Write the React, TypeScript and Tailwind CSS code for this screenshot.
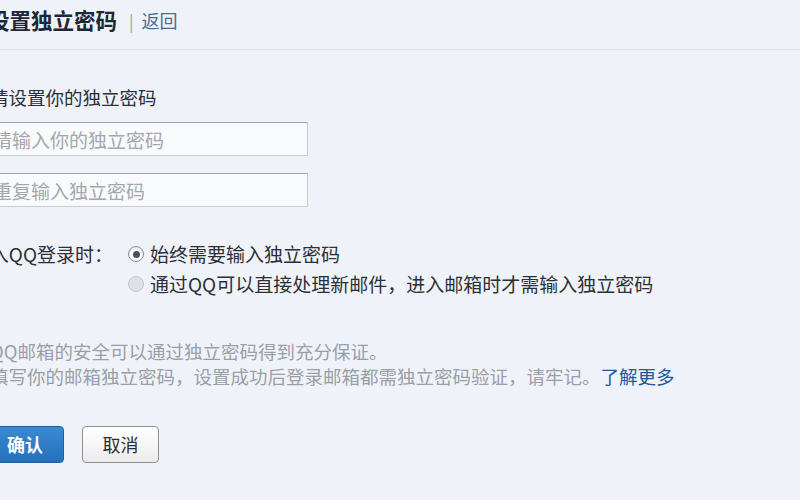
import React from "react";

function Radio({ checked }: { checked: boolean }) {
  return checked ? (
    <span className="flex h-[16px] w-[16px] shrink-0 items-center justify-center rounded-full border border-[#8d9299] bg-[#fdfdfd] shadow-[inset_0_1px_2px_rgba(0,0,0,0.15)]">
      <span className="h-[7px] w-[7px] rounded-full bg-[#4d5157]" />
    </span>
  ) : (
    <span className="h-[16px] w-[16px] shrink-0 rounded-full border border-[#c3c7cc] bg-[#dde0e4]" />
  );
}

export default function App() {
  return (
    <div className="h-[500px] w-[800px] overflow-hidden bg-[#eff3f9] font-['Noto_Sans_CJK_SC','Microsoft_YaHei',sans-serif] text-[#333]">
      {/* header */}
      <div className="flex h-[50px] items-center border-b border-[#dde2ea] pb-[9px]">
        <div className="ml-[-12px] flex items-center whitespace-nowrap">
          <span className="text-[21.5px] font-bold leading-none text-[#1d2738]">设置独立密码</span>
          <span className="ml-[12px] text-[17px] leading-none text-[#9aa0a8]">|</span>
          <span className="ml-[8px] text-[18px] leading-none text-[#4a6a9a]">返回</span>
        </div>
      </div>

      <div className="ml-[-10px] flex flex-col">
        <div className="mt-[35px] whitespace-nowrap text-[18.5px] leading-[24px] text-[#2b2f36]">请设置你的独立密码</div>

        <input
          type="password"
          placeholder="请输入你的独立密码"
          className="ml-[-10px] mt-[13px] h-[34px] w-[328px] border border-[#c7cbd0] border-t-[#9ea3a9] bg-[#f9fafc] pl-[12px] text-[19px] outline-none placeholder:text-[#a4a8ae]"
        />
        <input
          type="password"
          placeholder="重复输入独立密码"
          className="ml-[-10px] mt-[17px] h-[34px] w-[328px] border border-[#c7cbd0] border-t-[#9ea3a9] bg-[#f9fafc] pl-[12px] text-[19px] outline-none placeholder:text-[#a4a8ae]"
        />

        <div className="mt-[32px] flex">
          <div className="flex w-[123px] shrink-0 justify-end whitespace-nowrap text-[19px] leading-[30px] text-[#2b2f36]">
            进入QQ登录时：
          </div>
          <div className="ml-[15px] flex flex-col">
            <label className="flex h-[30px] items-center gap-[6px] whitespace-nowrap text-[19px] text-[#2b2f36]">
              <Radio checked />
              <span>始终需要输入独立密码</span>
            </label>
            <label className="flex h-[30px] items-center gap-[6px] whitespace-nowrap text-[19px] text-[#2b2f36]">
              <Radio checked={false} />
              <span>通过QQ可以直接处理新邮件，进入邮箱时才需输入独立密码</span>
            </label>
          </div>
        </div>

        <div className="mt-[40px] whitespace-nowrap text-[18.5px] leading-[25px] text-[#9a9fa6]">
          <div>QQ邮箱的安全可以通过独立密码得到充分保证。</div>
          <div>
            填写你的邮箱独立密码，设置成功后登录邮箱都需独立密码验证，请牢记。
            <span className="text-[#23589a]">了解更多</span>
          </div>
        </div>

        <div className="mt-[37px] flex gap-[18px]">
          <button className="ml-[-4px] h-[37px] w-[78px] rounded-[4px] border border-[#1f5e9c] bg-gradient-to-b from-[#3a8ad4] to-[#2470bb] text-[18px] font-bold text-white">
            确认
          </button>
          <button className="h-[37px] w-[77px] rounded-[4px] border border-[#8e9196] bg-gradient-to-b from-[#ffffff] to-[#ececec] text-[18px] text-[#2b2f36]">
            取消
          </button>
        </div>
      </div>
    </div>
  );
}
